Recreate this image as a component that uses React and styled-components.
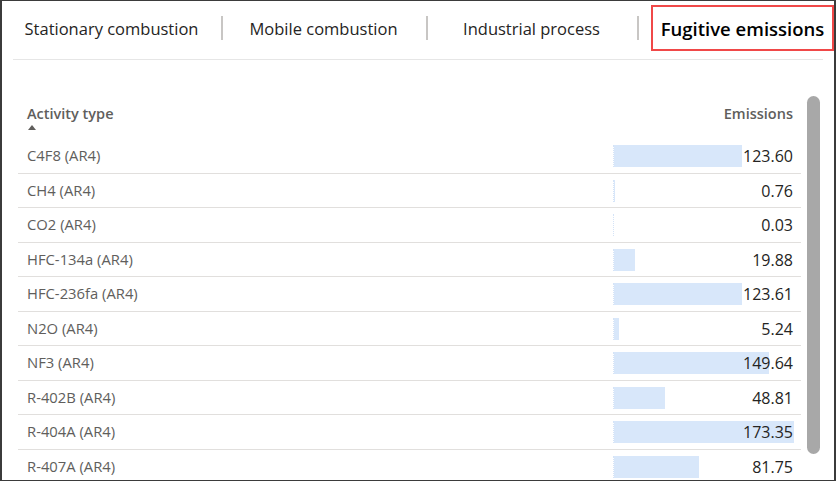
import styled, { createGlobalStyle } from 'styled-components';

const GlobalStyle = createGlobalStyle`
    body {
        margin: 0;
        background: #ffffff;
        font-family: "Open Sans", "Noto Sans", sans-serif;
    }
`;

const tabs = [
    { name: 'Stationary combustion', width: 219 },
    { name: 'Mobile combustion', width: 205 },
    { name: 'Industrial process', width: 211 },
    { name: 'Fugitive emissions', width: 211, active: true },
];

const rows = [
    { name: 'C4F8 (AR4)', value: 123.60 },
    { name: 'CH4 (AR4)', value: 0.76 },
    { name: 'CO2 (AR4)', value: 0.03 },
    { name: 'HFC-134a (AR4)', value: 19.88 },
    { name: 'HFC-236fa (AR4)', value: 123.61 },
    { name: 'N2O (AR4)', value: 5.24 },
    { name: 'NF3 (AR4)', value: 149.64 },
    { name: 'R-402B (AR4)', value: 48.81 },
    { name: 'R-404A (AR4)', value: 173.35 },
    { name: 'R-407A (AR4)', value: 81.75 },
];

const SCALE = 1.037;

export default function App () {
    return (
        <>
            <GlobalStyle />
            <Frame>
                <TabBar>
                    {tabs.map((tab, index) => (
                        <Tab key={tab.name} width={tab.width} last={index === tabs.length - 1}>
                            <TabLabel active={tab.active}>{tab.name}</TabLabel>
                        </Tab>
                    ))}
                </TabBar>
                <Rule />
                <Body>
                    <Table>
                        <HeaderRow>
                            <HeaderCell>
                                <span>Activity type</span>
                                <SortArrow />
                            </HeaderCell>
                            <HeaderCell right>
                                <span>Emissions</span>
                            </HeaderCell>
                        </HeaderRow>
                        {rows.map(row => (
                            <Row key={row.name}>
                                <NameCell>{row.name}</NameCell>
                                <ValueCell>
                                    <Bar style={{ width: `${row.value * SCALE}px` }} />
                                    <Value>{row.value.toFixed(2)}</Value>
                                </ValueCell>
                            </Row>
                        ))}
                    </Table>
                    <ScrollTrack>
                        <ScrollThumb />
                    </ScrollTrack>
                </Body>
            </Frame>
        </>
    )
}

const Frame = styled.div`
    width: 836px;
    height: 481px;
    box-sizing: border-box;
    border: 1px solid #3b3b3b;
    border-left-width: 2px;
    border-right-width: 2px;
    overflow: hidden;
    background: #ffffff;
`;

const TabBar = styled.div`
    display: flex;
    align-items: flex-start;
    height: 58px;
    padding-top: 4px;
    box-sizing: border-box;
`;

const Tab = styled.div`
    position: relative;
    display: flex;
    justify-content: center;
    width: ${props => props.width}px;
    flex-shrink: 0;

    &::after {
        content: '';
        display: ${props => props.last ? 'none' : 'block'};
        position: absolute;
        right: -2px;
        top: 11px;
        width: 2px;
        height: 24px;
        background: #c8c6c4;
    }
`;

const TabLabel = styled.div`
    font-size: ${props => props.active ? '18.5px' : '16.5px'};
    font-weight: ${props => props.active ? 600 : 400};
    color: ${props => props.active ? '#000000' : '#252423'};
    white-space: nowrap;
    box-sizing: border-box;
    height: 46px;
    display: flex;
    align-items: center;
    padding: 0 8px;
    border: 2px solid ${props => props.active ? '#f04848' : 'transparent'};
`;

const Rule = styled.div`
    height: 1px;
    margin: 0 11px;
    background: #e6e6e6;
`;

const Body = styled.div`
    display: flex;
    padding-left: 16px;
`;

const Table = styled.div`
    width: 783px;
    display: flex;
    flex-direction: column;
`;

const HeaderRow = styled.div`
    display: grid;
    grid-template-columns: 595px 1fr;
    height: 79px;
    box-sizing: border-box;
    padding: 44px 8px 0 9px;
`;

const HeaderCell = styled.div`
    display: flex;
    flex-direction: column;
    align-items: ${props => props.right ? 'flex-end' : 'flex-start'};
    font-size: 14.5px;
    font-weight: 600;
    color: #605e5c;
    gap: 2px;
`;

const SortArrow = styled.div`
    width: 0;
    height: 0;
    margin-left: 1px;
    border-left: 4px solid transparent;
    border-right: 4px solid transparent;
    border-bottom: 5px solid #605e5c;
`;

const Row = styled.div`
    display: grid;
    grid-template-columns: 595px 1fr;
    height: 34.5px;
    box-sizing: border-box;
    border-bottom: 1px solid #e1dfdd;
`;

const NameCell = styled.div`
    display: flex;
    align-items: center;
    padding-left: 9px;
    padding-bottom: 2px;
    font-size: 14.8px;
    color: #605e5c;
    white-space: nowrap;
`;

const ValueCell = styled.div`
    position: relative;
    display: flex;
    align-items: center;
    justify-content: flex-end;
    padding-right: 8px;
    border-left: 1px dotted #d4e3f7;
    margin: 6px 0 6px 0;
`;

const Bar = styled.div`
    position: absolute;
    left: 0;
    top: 0;
    bottom: 0;
    background: #d8e7fa;
`;

const Value = styled.span`
    position: relative;
    font-size: 16px;
    color: #252423;
`;

const ScrollTrack = styled.div`
    padding: 36px 0 0 6px;
`;

const ScrollThumb = styled.div`
    width: 13px;
    height: 358px;
    border-radius: 7px;
    background: #a8a8a8;
`;
